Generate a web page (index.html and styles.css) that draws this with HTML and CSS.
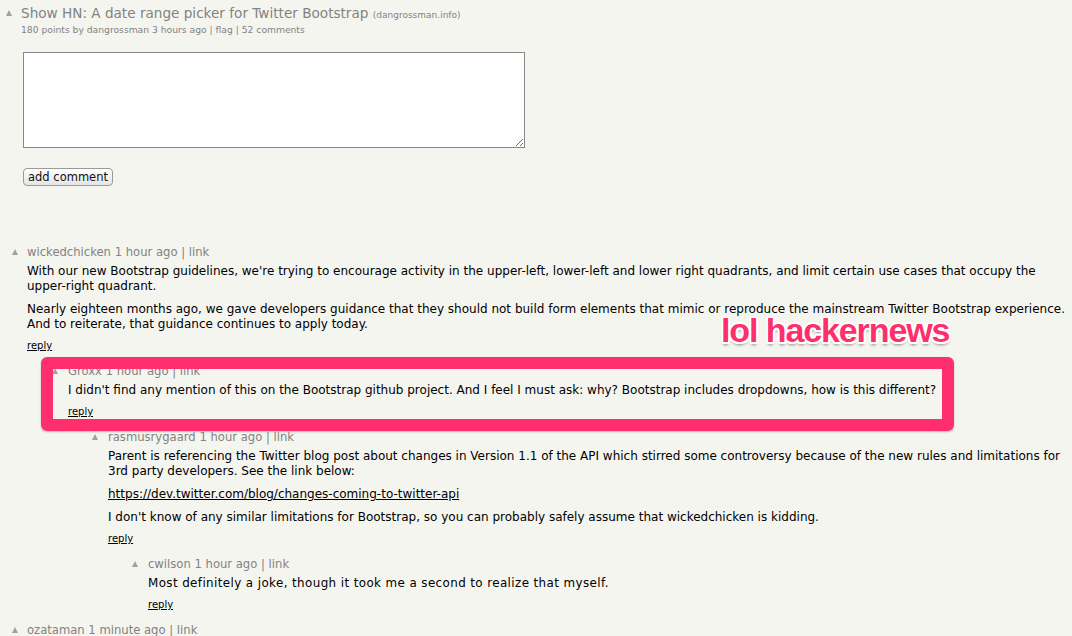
FILE: index.html
```html
<!DOCTYPE html>
<html>
<head>
<meta charset="utf-8">
<link rel="stylesheet" href="styles.css">
</head>
<body>
<div class="page">
  <div class="story">
    <div class="vote"><span class="arrow"></span></div>
    <div class="story-main">
      <div class="title">Show HN: A date range picker for Twitter Bootstrap <span class="site">(dangrossman.info)</span></div>
      <div class="subtext">180 points by dangrossman 3 hours ago | flag | 52 comments</div>
    </div>
  </div>

  <form class="reply-form">
    <textarea class="box"></textarea>
    <button type="button" class="btn">add comment</button>
  </form>

  <div class="comments">
    <div class="comment lvl0">
      <div class="vote"><span class="arrow"></span></div>
      <div class="cbody">
        <div class="comhead">wickedchicken 1 hour ago | link</div>
        <div class="ctext">
          <p>With our new Bootstrap guidelines, we're trying to encourage activity in the upper-left, lower-left and lower right quadrants, and limit certain use cases that occupy the upper-right quadrant.</p>
          <p>Nearly eighteen months ago, we gave developers guidance that they should not build form elements that mimic or reproduce the mainstream Twitter Bootstrap experience. And to reiterate, that guidance continues to apply today.</p>
          <p class="reply"><a>reply</a></p>
        </div>
      </div>
    </div>

    <div class="comment lvl1 highlighted">
      <div class="vote"><span class="arrow"></span></div>
      <div class="cbody">
        <div class="comhead">Groxx 1 hour ago | link</div>
        <div class="ctext">
          <p>I didn't find any mention of this on the Bootstrap github project. And I feel I must ask: why? Bootstrap includes dropdowns, how is this different?</p>
          <p class="reply"><a>reply</a></p>
        </div>
      </div>
      <div class="marker"></div>
      <div class="caption">lol hackernews</div>
    </div>

    <div class="comment lvl2">
      <div class="vote"><span class="arrow"></span></div>
      <div class="cbody">
        <div class="comhead">rasmusrygaard 1 hour ago | link</div>
        <div class="ctext">
          <p>Parent is referencing the Twitter blog post about changes in Version 1.1 of the API which stirred some controversy because of the new rules and limitations for 3rd party developers. See the link below:</p>
          <p><a>https://dev.twitter.com/blog/changes-coming-to-twitter-api</a></p>
          <p>I don't know of any similar limitations for Bootstrap, so you can probably safely assume that wickedchicken is kidding.</p>
          <p class="reply"><a>reply</a></p>
        </div>
      </div>
    </div>

    <div class="comment lvl3">
      <div class="vote"><span class="arrow"></span></div>
      <div class="cbody">
        <div class="comhead">cwilson 1 hour ago | link</div>
        <div class="ctext">
          <p class="alt">Most definitely a joke, though it took me a second to realize that myself.</p>
          <p class="reply"><a>reply</a></p>
        </div>
      </div>
    </div>

    <div class="comment lvl0">
      <div class="vote"><span class="arrow"></span></div>
      <div class="cbody">
        <div class="comhead">ozataman 1 minute ago | link</div>
      </div>
    </div>
  </div>
</div>
</body>
</html>
```
FILE: styles.css
```css
html, body {
  margin: 0;
  padding: 0;
  background: #f5f5f0;
}
body {
  font-family: "DejaVu Sans", Verdana, sans-serif;
  color: #000;
  width: 1072px;
  height: 636px;
  overflow: hidden;
}
.page {
  position: relative;
  padding: 5px 0 0 0;
}
.story {
  display: flex;
  padding-left: 6px;
}
.story .vote {
  width: 15px;
  padding-top: 5px;
}
.arrow {
  display: block;
  width: 0;
  height: 0;
  border-left: 3.5px solid transparent;
  border-right: 3.5px solid transparent;
  border-bottom: 6px solid #a0a0a0;
}
.title {
  font-size: 13.6px;
  line-height: 16px;
  color: #828282;
}
.site {
  font-size: 9px;
}
.subtext {
  font-size: 9.2px;
  line-height: 14px;
  color: #828282;
}
.reply-form {
  display: flex;
  flex-direction: column;
  align-items: flex-start;
  padding-left: 23px;
  margin-top: 15px;
}
.box {
  width: 502px;
  height: 96px;
  box-sizing: border-box;
  border: 1px solid #888;
  background: #fff;
  margin: 0;
  padding: 0;
}
.btn {
  margin-top: 20px;
  height: 18px;
  width: 90px;
  padding: 0;
  font-family: "DejaVu Sans", sans-serif;
  font-size: 11.5px;
  color: #111;
  border: 1px solid #9a9a9a;
  border-radius: 4px;
  background: linear-gradient(#ffffff, #e4e4e4);
}
.comments {
  margin-top: 59px;
  display: flex;
  flex-direction: column;
}
.comment {
  display: flex;
  position: relative;
  margin-bottom: 11px;
}
.comment .vote {
  width: 15px;
  flex: none;
  padding-top: 4px;
}
.lvl0 { padding-left: 12px; }
.lvl1 { padding-left: 52px; }
.lvl1 .vote { width: 16px; }
.lvl2 { padding-left: 92px; }
.lvl2 .vote { width: 16px; }
.lvl3 { padding-left: 132px; }
.lvl3 .vote { width: 16px; }
.cbody {
  flex: 1;
  padding-right: 4px;
}
.comhead {
  font-size: 11.6px;
  line-height: 14px;
  color: #828282;
}
.ctext {
  margin-top: 5px;
  font-size: 12px;
  line-height: 15px;
}
.ctext p {
  margin: 0 0 8px 0;
}
.ctext p.reply {
  margin: -1px 0 0 0;
  font-size: 10px;
  line-height: 14px;
}
.ctext a {
  color: #000;
  text-decoration: underline;
}
.ctext p.alt {
  letter-spacing: 0.4px;
  font-size: 11.9px;
}
.marker {
  position: absolute;
  left: 41px;
  top: -7px;
  width: 913px;
  height: 74px;
  box-sizing: border-box;
  border: 12px solid #ff2e6c;
  border-radius: 6px;
  box-shadow: 0 1px 2px rgba(0,0,0,0.25);
}
.caption {
  position: absolute;
  left: 721px;
  top: -52px;
  font-family: "Liberation Sans", Arial, sans-serif;
  font-weight: bold;
  font-size: 34px;
  line-height: 36px;
  letter-spacing: -1.1px;
  color: #ff2e6c;
  text-shadow:
    -2px 0 0 #fff, 2px 0 0 #fff, 0 -2px 0 #fff, 0 2px 0 #fff,
    -1.5px -1.5px 0 #fff, 1.5px -1.5px 0 #fff, -1.5px 1.5px 0 #fff, 1.5px 1.5px 0 #fff,
    0 3px 3px rgba(0,0,0,0.45);
}
```
